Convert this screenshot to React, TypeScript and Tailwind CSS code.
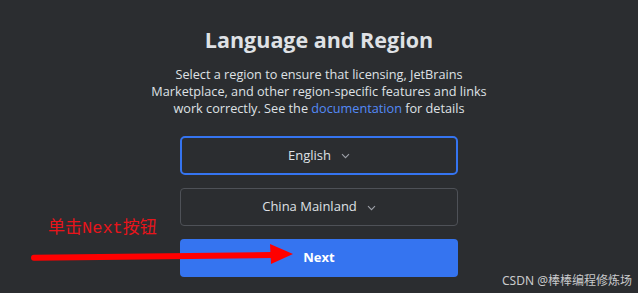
import React from "react";

function Chevron() {
  return (
    <svg width="9" height="6" viewBox="0 0 9 6" className="ml-[10px] mt-[1px]">
      <path d="M1 1.2 L4.5 4.7 L8 1.2" fill="none" stroke="#9da0a8" strokeWidth="1.1" />
    </svg>
  );
}

export default function App() {
  return (
    <div
      className="relative w-[638px] h-[293px] overflow-hidden bg-[#2b2d30] text-[#dfe1e5]"
      style={{ fontFamily: '"Open Sans", "Noto Sans", sans-serif' }}
    >
      <div className="flex flex-col items-center pt-[25px]">
        <h1 className="text-[21.5px] leading-[30px] font-bold text-[#dfe1e5]">Language and Region</h1>
        <p className="mt-[11px] text-[12.7px] leading-[17px] text-center text-[#dfe1e5]">
          Select a region to ensure that licensing, JetBrains
          <br />
          Marketplace, and other region-specific features and links
          <br />
          work correctly. See the <span className="text-[#548af7]">documentation</span> for details
        </p>
        <div className="mt-[19px] flex flex-col gap-[13px] w-[278px]">
          <div className="h-[39px] rounded-[5px] border-2 border-[#3574f0] flex items-center justify-center text-[13px]">
            <span>English</span>
            <Chevron />
          </div>
          <div className="h-[38px] rounded-[4px] border border-[#4e5157] flex items-center justify-center text-[13px]">
            <span>China Mainland</span>
            <Chevron />
          </div>
          <button className="h-[38px] rounded-[4px] bg-[#3574f0] flex items-center justify-center text-[13px] font-bold text-white">
            Next
          </button>
        </div>
      </div>

      <div
        className="absolute left-[48px] top-[219px] text-[17px] leading-[20px] text-[#e8141b]"
        style={{ fontFamily: '"Liberation Mono", "Noto Sans CJK SC", monospace' }}
      >
        单击Next按钮
      </div>

      <svg className="absolute left-0 top-0" width="638" height="293" viewBox="0 0 638 293">
        <line x1="34" y1="257.8" x2="272" y2="255" stroke="#ff0000" strokeWidth="6" strokeLinecap="round" />
        <polygon points="270,244 293,254 271,264" fill="#ff0000" />
      </svg>

      <div
        className="absolute right-[6px] top-[273px] text-[12px] leading-[16px] text-[#c9cacc]"
        style={{ fontFamily: '"Noto Sans", "Noto Sans CJK SC", sans-serif' }}
      >
        CSDN @棒棒编程修炼场
      </div>
    </div>
  );
}
